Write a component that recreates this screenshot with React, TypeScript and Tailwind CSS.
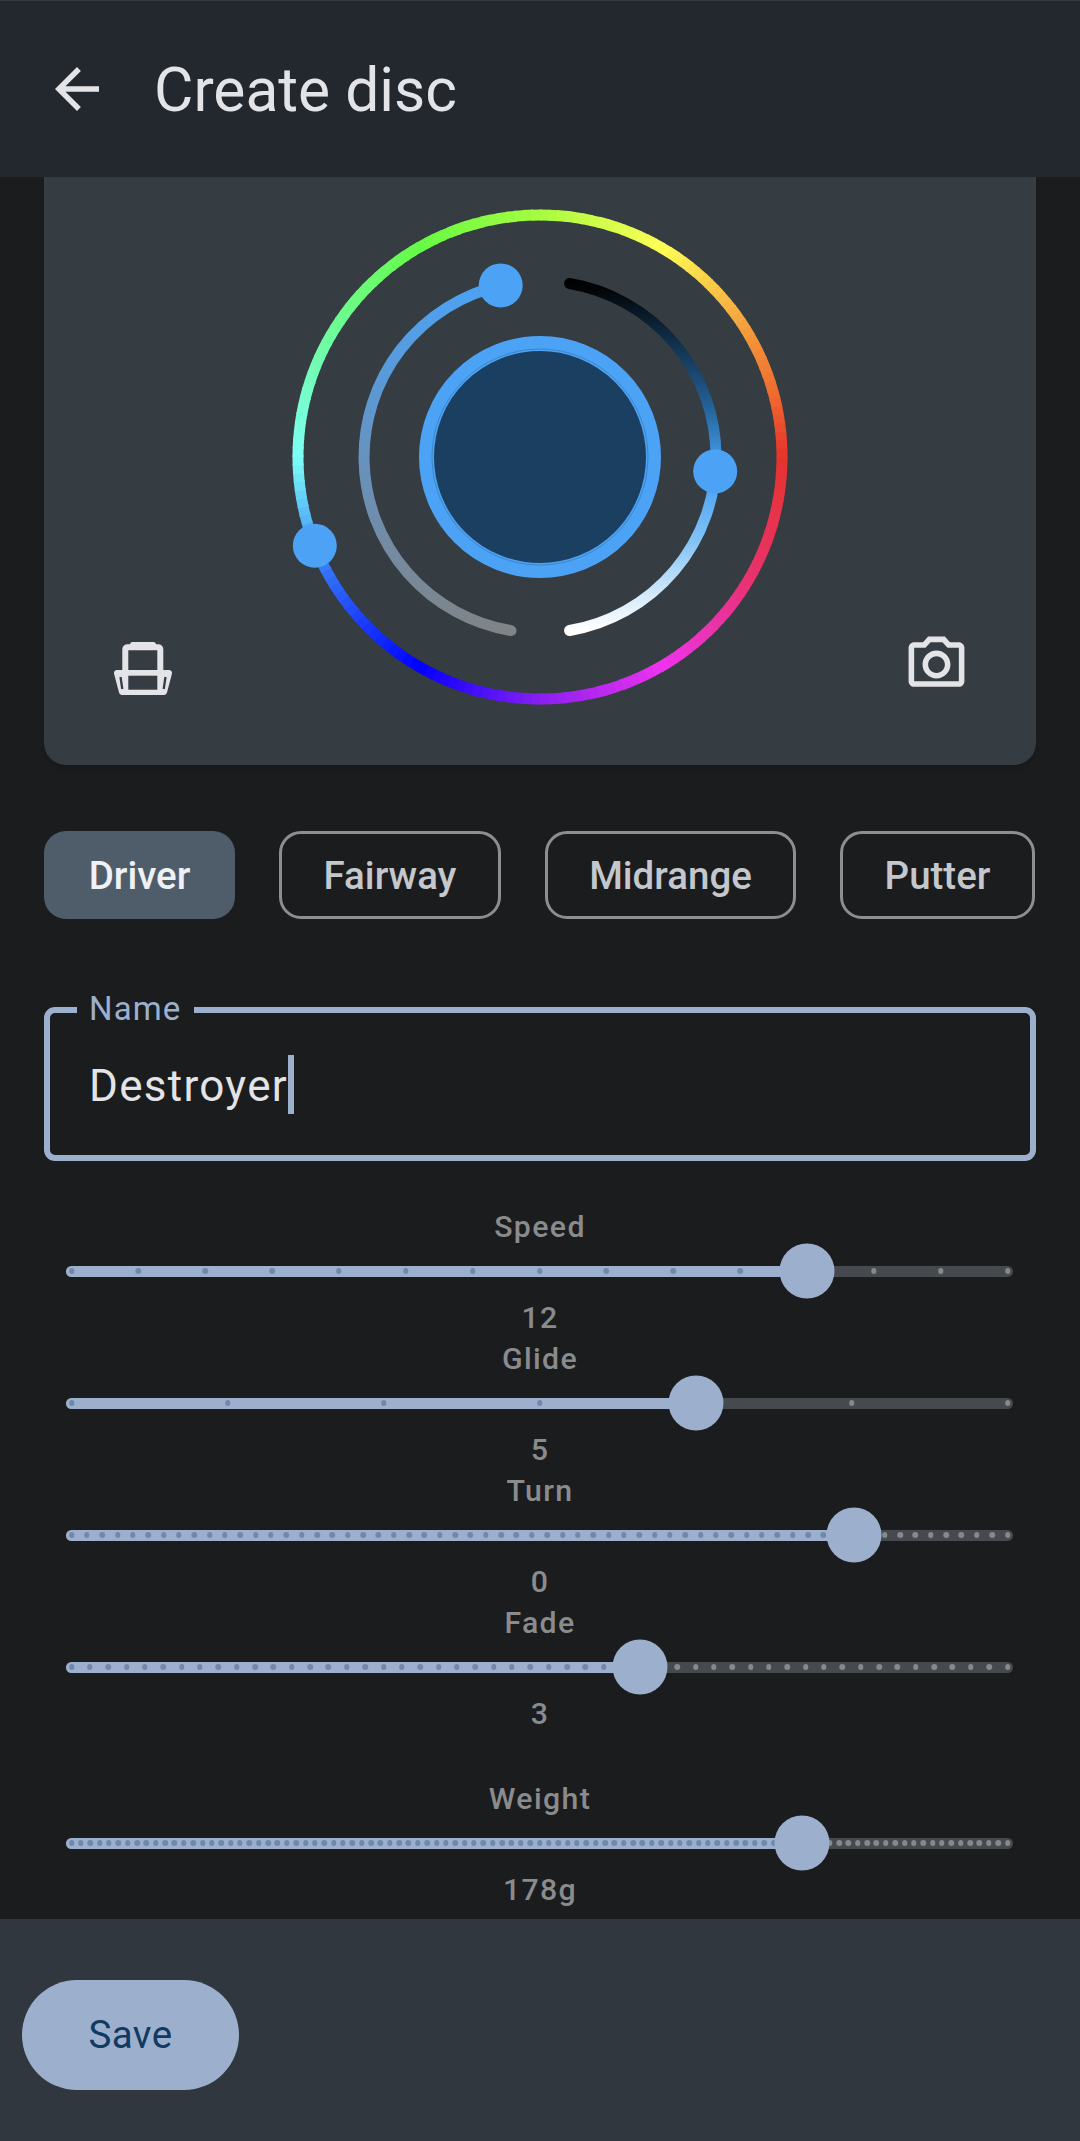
import React from 'react';

const hueStops: [number, string][] = [
  [0, '#e6332c'],
  [30, '#e8326e'],
  [60, '#ee33ee'],
  [90, '#8a1ff0'],
  [120, '#0000ff'],
  [150, '#2f6cf7'],
  [180, '#7dfff5'],
  [210, '#6ffb9c'],
  [240, '#66fb45'],
  [270, '#a6fb3f'],
  [300, '#ffff55'],
  [330, '#f3963a'],
  [345, '#ef6a2f'],
  [360, '#e6332c'],
];

const toRgb = (hex: string) => [1, 3, 5].map(i => parseInt(hex.slice(i, i + 2), 16));

const hueAt = (deg: number) => {
  for (let i = 0; i < hueStops.length - 1; i++) {
    const [a, ca] = hueStops[i];
    const [b, cb] = hueStops[i + 1];
    if (deg >= a && deg <= b) {
      const t = (deg - a) / (b - a);
      const x = toRgb(ca);
      const y = toRgb(cb);
      return `rgb(${x.map((v, k) => Math.round(v + (y[k] - v) * t)).join(',')})`;
    }
  }
  return hueStops[0][1];
};

const HueRing = () => {
  const r = 242;
  const step = 2;
  const parts = [];
  for (let d = 0; d < 360; d += step) {
    const a = (d * Math.PI) / 180;
    const b = ((d + step + 0.4) * Math.PI) / 180;
    parts.push(
      <path
        key={d}
        d={`M${250 + r * Math.cos(a)} ${250 + r * Math.sin(a)}A${r} ${r} 0 0 1 ${250 + r * Math.cos(b)} ${250 + r * Math.sin(b)}`}
        stroke={hueAt(d + step / 2)}
        strokeWidth="11"
        fill="none"
      />
    );
  }
  return <g>{parts}</g>;
};

const ColorWheel = () => (
  <svg width="500" height="500" viewBox="0 0 500 500" className="block">
    <defs>
      <linearGradient id="leftArc" gradientUnits="userSpaceOnUse" x1="0" y1="78" x2="0" y2="423">
        <stop offset="0" stopColor="#4ca2f5" />
        <stop offset="1" stopColor="#808488" />
      </linearGradient>
      <linearGradient id="rightArc" gradientUnits="userSpaceOnUse" x1="0" y1="76" x2="0" y2="423">
        <stop offset="0" stopColor="#000000" />
        <stop offset="0.15" stopColor="#0f2a42" />
        <stop offset="0.35" stopColor="#235f95" />
        <stop offset="0.5" stopColor="#4096e0" />
        <stop offset="0.58" stopColor="#4ca2f5" />
        <stop offset="0.75" stopColor="#85c4f5" />
        <stop offset="0.9" stopColor="#d5eafb" />
        <stop offset="1" stopColor="#ffffff" />
      </linearGradient>
    </defs>
    <HueRing />
    <path d="M221 423.6A176 176 0 0 1 211 78.4" stroke="url(#leftArc)" strokeWidth="11" strokeLinecap="round" fill="none" />
    <path d="M279.6 76.5A176 176 0 0 1 279.6 423.5" stroke="url(#rightArc)" strokeWidth="11" strokeLinecap="round" fill="none" />
    <circle cx="250" cy="250" r="113.5" fill="#1a3f61" stroke="#4ca2f5" strokeWidth="15" />
    <circle cx="250" cy="250" r="108" fill="none" stroke="#3a86cc" strokeWidth="1" />
    <circle cx="210.7" cy="78.4" r="22" fill="#4ca2f5" />
    <circle cx="425.2" cy="264.3" r="22" fill="#4ca2f5" />
    <circle cx="24.8" cy="338.7" r="22" fill="#4ca2f5" />
  </svg>
);

const PrinterIcon = () => (
  <svg width="58" height="53" viewBox="0 0 58 53" fill="none" className="block">
    <path d="M18 0h22a3 3 0 0 1 2 2l1 3H15l1-3a3 3 0 0 1 2-2Z" fill="#e3e4e8" />
    <path d="M11.300 28V7.300a2 2 0 0 1 2-2h31a2 2 0 0 1 2 2V28" stroke="#e3e4e8" strokeWidth="6" />
    <path d="M3 28h52a3 3 0 0 1 3 3.500l-5 19a3 3 0 0 1-3 2.500H8a3 3 0 0 1-3-2.500L0 31.500A3 3 0 0 1 3 28Z" fill="#e3e4e8" />
    <path d="M14.300 33.700h29v14h-29Z" fill="#353c42" />
    <path d="M6.500 35l1.800 12M51.500 35l-1.800 12" stroke="#353c42" strokeWidth="2.300" />
  </svg>
);

const CameraIcon = () => (
  <svg width="67" height="67" viewBox="0 0 24 24" fill="#e3e4e8" className="block">
    <path d="M20 4h-3.17L15 2H9L7.17 4H4c-1.1 0-2 .9-2 2v12c0 1.1.9 2 2 2h16c1.1 0 2-.9 2-2V6c0-1.1-.9-2-2-2zm0 14H4V6h4.05l1.83-2h4.24l1.83 2H20v12zM12 7c-2.76 0-5 2.24-5 5s2.24 5 5 5 5-2.24 5-5-2.24-5-5-5zm0 8c-1.65 0-3-1.35-3-3s1.35-3 3-3 3 1.35 3 3-1.35 3-3 3z" />
  </svg>
);

const BackIcon = () => (
  <svg width="66" height="66" viewBox="0 0 24 24" fill="#e3e4e8" className="block">
    <path d="M20 11H7.830l5.590-5.590L12 4l-8 8 8 8 1.410-1.410L7.830 13H20v-2z" />
  </svg>
);

interface SliderProps {
  label: string;
  value: string;
  divisions: number;
  at: number;
}

const Slider: React.FC<SliderProps> = ({ label, value, divisions, at }) => {
  const frac = at / divisions;
  const pos = (f: number) => `calc(5.5px + (100% - 11px) * ${f})`;
  return (
    <div className="flex flex-col items-center">
      <div className="h-[44px] flex items-center text-[30.25px] font-medium tracking-[1.375px] text-[#8a8b8d]">{label}</div>
      <div className="h-[44px] w-full flex items-center pl-[66px] pr-[67px]">
        <div className="relative h-[11px] w-full rounded-full bg-[#46494d]">
          <div className="absolute left-0 top-0 h-[11px] rounded-l-full bg-[#9cb0cd]" style={{ width: pos(frac) }} />
          {Array.from({ length: divisions + 1 }, (_, i) => (
            <span
              key={i}
              className={`absolute top-[2.75px] h-[5.5px] w-[5.5px] -translate-x-1/2 rounded-full ${i <= at ? 'bg-[#7089ab]' : 'bg-[#85888c]'}`}
              style={{ left: pos(i / divisions) }}
            />
          ))}
          <span
            className="absolute top-[5.5px] h-[55px] w-[55px] -translate-x-1/2 -translate-y-1/2 rounded-full bg-[#9cb0cd]"
            style={{ left: pos(frac) }}
          />
        </div>
      </div>
      <div className="h-[44px] pt-[6px] flex items-center text-[30.25px] font-medium tracking-[1.375px] text-[#8a8b8d]">{value}</div>
    </div>
  );
};

const chips = [
  { name: 'Driver', w: 'w-[191px]', active: true },
  { name: 'Fairway', w: 'w-[222px]', active: false },
  { name: 'Midrange', w: 'w-[251px]', active: false },
  { name: 'Putter', w: 'w-[195px]', active: false },
];

export default function App() {
  return (
    <div className="h-screen w-full flex flex-col bg-[#1b1c1e] font-['Roboto',sans-serif] overflow-hidden">
      {/* Header */}
      <div className="h-[177px] shrink-0 flex items-center border-t border-[#33383e] bg-[#23282e] pl-[44px]">
        <BackIcon />
        <h1 className="ml-[44px] pt-[5px] text-[60.5px] font-normal text-[#e3e4e8]">Create disc</h1>
      </div>

      <div className="flex-1 min-h-0 overflow-hidden">
        <div className="px-[44px]">
          {/* Disc preview */}
          <div className="grid grid-cols-[1fr_auto_1fr] items-end rounded-b-[22px] bg-[#353c42] pt-[30px] pb-[58px] shadow-md">
            <div className="ml-[70px] mb-[12px]"><PrinterIcon /></div>
            <ColorWheel />
            <div className="flex justify-end mr-[66px] mb-[9px]"><CameraIcon /></div>
          </div>

          {/* Disc type */}
          <div className="mt-[66px] flex gap-[44px]">
            {chips.map(c => (
              <div
                key={c.name}
                className={`${c.w} h-[88px] pt-[2px] flex items-center justify-center rounded-[22px] text-[38.5px] font-medium ${
                  c.active ? 'bg-[#4f5d6b] text-[#eef1f6]' : 'border-[3px] border-[#8e8e8e] text-[#c4c7cc]'
                }`}
              >
                {c.name}
              </div>
            ))}
          </div>

          {/* Name */}
          <div className="relative mt-[88px] h-[154px] flex items-center rounded-[11px] border-[6px] border-[#9cb0cd] pl-[39px]">
            <span className="absolute left-[27px] top-[-26px] bg-[#1b1c1e] pl-[12px] pr-[13px] text-[33px] leading-[44px] tracking-[1.1px] text-[#9cb0cd]">Name</span>
            <span className="pt-[3px] text-[44px] tracking-[1.3px] text-[#e3e4e8]">Destroyer</span>
            <span className="h-[59px] w-[5.5px] bg-[#9cb0cd]" />
          </div>
        </div>

        {/* Flight numbers */}
        <div className="mt-[44px]">
          <Slider label="Speed" value="12" divisions={14} at={11} />
          <Slider label="Glide" value="5" divisions={6} at={4} />
          <Slider label="Turn" value="0" divisions={61} at={51} />
          <Slider label="Fade" value="3" divisions={51} at={31} />
          <div className="mt-[44px]">
            <Slider label="Weight" value="178g" divisions={100} at={78} />
          </div>
        </div>
      </div>

      {/* Footer */}
      <div className="h-[222px] shrink-0 flex items-center bg-[#31373e] pl-[22px] pt-[10px]">
        <button className="h-[110px] w-[217px] rounded-full bg-[#9cb0cd] text-[38.5px] tracking-[0.4px] text-[#113a62]">Save</button>
      </div>
    </div>
  );
}
